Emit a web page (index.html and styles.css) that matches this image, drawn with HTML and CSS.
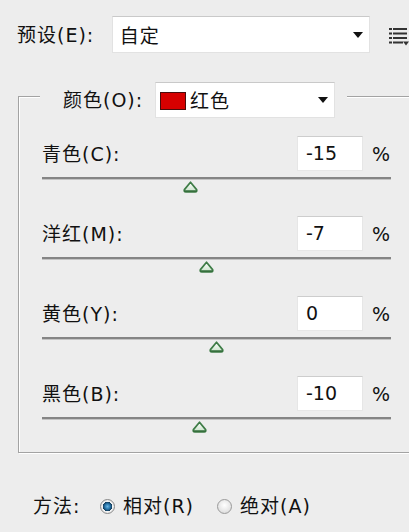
FILE: index.html
```html
<!DOCTYPE html>
<html lang="zh">
<head>
<meta charset="utf-8">
<title>可选颜色</title>
<link rel="stylesheet" href="styles.css">
</head>
<body>
<div class="page">
  <div class="preset-row">
    <span class="label preset-label">预设(E):</span>
    <div class="select preset-select">
      <span class="select-text">自定</span>
      <span class="arrow"></span>
    </div>
    <svg class="menu-icon" width="20" height="20" viewBox="0 0 20 20">
      <g fill="#333">
        <rect x="0" y="0" width="3" height="2"/>
        <rect x="4" y="0" width="14" height="2"/>
        <rect x="0" y="4.5" width="3" height="2"/>
        <rect x="4" y="4.5" width="14" height="2"/>
        <rect x="0" y="9" width="3" height="2"/>
        <rect x="4" y="9" width="14" height="2"/>
        <rect x="0" y="13.5" width="3" height="2"/>
        <rect x="4" y="13.5" width="10" height="2"/>
        <path d="M14 13.5 H20 L17 17.5 Z"/>
      </g>
    </svg>
  </div>

  <div class="group">
    <div class="legend">
      <span class="label">颜色(O):</span>
      <div class="select color-select">
        <span class="swatch"></span>
        <span class="select-text">红色</span>
        <span class="arrow"></span>
      </div>
    </div>

    <div class="rows">
      <div class="row">
        <div class="row-head">
          <span class="label row-label">青色(C):</span>
          <div class="num">-15</div>
          <span class="pct">%</span>
        </div>
        <div class="slider">
          <svg class="thumb" style="left: calc(42.5% - 7.5px)" width="15" height="12" viewBox="0 0 15 12"><use href="#thumb-shape"/></svg>
        </div>
      </div>
      <div class="row">
        <div class="row-head">
          <span class="label row-label">洋红(M):</span>
          <div class="num">-7</div>
          <span class="pct">%</span>
        </div>
        <div class="slider">
          <svg class="thumb" style="left: calc(47% - 7.5px)" width="15" height="12" viewBox="0 0 15 12"><use href="#thumb-shape"/></svg>
        </div>
      </div>
      <div class="row">
        <div class="row-head">
          <span class="label row-label">黄色(Y):</span>
          <div class="num">0</div>
          <span class="pct">%</span>
        </div>
        <div class="slider">
          <svg class="thumb" style="left: calc(50% - 7.5px)" width="15" height="12" viewBox="0 0 15 12"><use href="#thumb-shape"/></svg>
        </div>
      </div>
      <div class="row">
        <div class="row-head">
          <span class="label row-label">黑色(B):</span>
          <div class="num">-10</div>
          <span class="pct">%</span>
        </div>
        <div class="slider">
          <svg class="thumb" style="left: calc(45% - 7.5px)" width="15" height="12" viewBox="0 0 15 12"><use href="#thumb-shape"/></svg>
        </div>
      </div>
    </div>
  </div>

  <div class="method-row">
    <span class="label method-label">方法:</span>
    <span class="radio checked"></span>
    <span class="label radio-label">相对(R)</span>
    <span class="radio"></span>
    <span class="label radio-label">绝对(A)</span>
  </div>
</div>

<svg width="0" height="0" class="defs">
  <defs>
    <linearGradient id="thumbFill" x1="0" y1="0" x2="0" y2="1">
      <stop offset="0" stop-color="#ffffff"/>
      <stop offset="1" stop-color="#c8e2c8"/>
    </linearGradient>
    <g id="thumb-shape">
      <path d="M7.5 1.2 L13.6 8.6 Q14.4 10.8 12.2 10.8 H2.8 Q0.6 10.8 1.4 8.6 Z" fill="url(#thumbFill)" stroke="#3e7c46" stroke-width="1.7" stroke-linejoin="round"/>
      <path d="M2.2 10.2 H12.8" stroke="#356f3c" stroke-width="1.8" stroke-linecap="round"/>
    </g>
  </defs>
</svg>
</body>
</html>
```

FILE: styles.css
```css
html, body {
  margin: 0;
  padding: 0;
  overflow: hidden;
}

body {
  background: #ededed;
  font-family: "DejaVu Sans", "Noto Sans CJK SC", sans-serif;
  color: #111111;
  font-size: 19px;
  width: 409px;
  height: 532px;
}

.page {
  width: 409px;
}

.defs {
  position: absolute;
  width: 0;
  height: 0;
}

.label {
  font-family: "DejaVu Sans", "Noto Sans CJK SC", sans-serif;
  font-size: 19px;
  line-height: 24px;
  letter-spacing: 1px;
  white-space: nowrap;
}

/* top preset row */
.preset-row {
  display: flex;
  align-items: center;
  padding: 16px 0 0 17px;
  height: 37px;
}

.preset-label {
  width: 95px;
}

.select {
  display: flex;
  align-items: center;
  background: #ffffff;
  border: 1px solid #e2e2e2;
  border-top-color: #c9c9c9;
  box-sizing: border-box;
  position: relative;
}

.preset-select {
  width: 259px;
  height: 37px;
  padding-left: 7px;
}

.select-text {
  font-family: "Noto Sans CJK SC", sans-serif;
  font-size: 19px;
  line-height: 24px;
  letter-spacing: 1px;
  flex: 1;
}

.arrow {
  width: 0;
  height: 0;
  border-left: 5.5px solid transparent;
  border-right: 5.5px solid transparent;
  border-top: 6px solid #111;
  margin-right: 6px;
}

.menu-icon {
  margin-left: 19px;
  margin-top: 6px;
  flex: none;
}

/* group box */
.group {
  margin: 43px 0 0 18px;
  width: 400px;
  border: 1px solid #a3a3a3;
  box-shadow: inset 1px 1px 0 #ffffff, 1px 1px 0 #ffffff;
}

.legend {
  display: inline-flex;
  align-items: center;
  margin: -15px 0 0 21px;
  padding: 0 12px 0 23px;
  background: #ededed;
  height: 36px;
  vertical-align: top;
}

.legend .label {
  width: 92px;
}

.color-select {
  width: 180px;
  height: 36px;
  padding-left: 4px;
}

.swatch {
  width: 24px;
  height: 16px;
  background: #d70000;
  border: 1px solid #4a0c0c;
  margin-right: 4px;
  margin-top: 2px;
  flex: none;
}

.rows {
  margin: 17px 0 0 23px;
  width: 349px;
}

.row-head {
  display: flex;
  align-items: center;
  height: 35px;
}

.row-label {
  flex: 1;
}

.num {
  width: 66px;
  height: 35px;
  box-sizing: border-box;
  background: #ffffff;
  border: 1px solid #e6e6e6;
  border-top-color: #cdcdcd;
  padding-left: 8px;
  font-family: "DejaVu Sans", sans-serif;
  font-size: 19px;
  line-height: 33px;
}

.pct {
  width: 19px;
  margin-left: 9px;
  font-family: "DejaVu Sans", sans-serif;
  font-size: 19px;
  line-height: 24px;
}

.slider {
  position: relative;
  height: 39px;
  margin-top: 6px;
}

.row:last-child .slider {
  height: 35px;
}

.slider::before {
  content: "";
  display: block;
  height: 3px;
  background: #858585;
  border-bottom: 1px solid #c4c4c4;
  box-sizing: border-box;
}

.thumb {
  position: absolute;
  top: 4px;
}

/* method row */
.method-row {
  display: flex;
  align-items: center;
  margin-top: 41px;
  padding-left: 33px;
  height: 24px;
}

.method-label {
  width: 67px;
}

.radio {
  width: 15px;
  height: 15px;
  border-radius: 50%;
  box-sizing: border-box;
  border: 1px solid #9a9a9a;
  background: radial-gradient(circle at 50% 40%, #ffffff 0%, #e6e6e6 60%, #cfcfcf 100%);
  flex: none;
  margin-right: 8px;
}

.radio.checked {
  background: radial-gradient(circle at 50% 50%, #6fb6e0 0, #2a7ab0 2.5px, #133d5c 4.5px, #f2f2f2 5px, #d8d8d8 100%);
  border-color: #8a8a8a;
}

.radio-label {
  margin-right: 23px;
}
```
